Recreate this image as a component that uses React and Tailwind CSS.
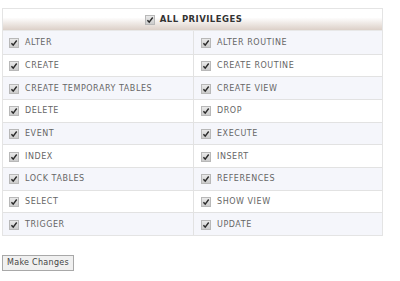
import React from 'react';

const rows = [
  ['ALTER', 'ALTER ROUTINE'],
  ['CREATE', 'CREATE ROUTINE'],
  ['CREATE TEMPORARY TABLES', 'CREATE VIEW'],
  ['DELETE', 'DROP'],
  ['EVENT', 'EXECUTE'],
  ['INDEX', 'INSERT'],
  ['LOCK TABLES', 'REFERENCES'],
  ['SELECT', 'SHOW VIEW'],
  ['TRIGGER', 'UPDATE'],
];

const Check = () => (
  <svg width="10" height="10" viewBox="0 0 10 10" className="shrink-0">
    <defs>
      <linearGradient id="cb" x1="0" y1="0" x2="0" y2="1">
        <stop offset="0" stopColor="#ebebeb" />
        <stop offset="1" stopColor="#cacaca" />
      </linearGradient>
    </defs>
    <rect x="0.5" y="0.5" width="9" height="9" fill="url(#cb)" stroke="#b8b8b8" />
    <path d="M2.4 5.2 L4.2 7.1 L7.7 2.5" fill="none" stroke="#2a2a2a" strokeWidth="1.4" />
  </svg>
);

const Cell = ({ label, right }) => (
  <div className={`flex items-center gap-[6px] pt-[1px] ${right ? 'border-l border-[#e2e2e2] pl-[7px]' : 'pl-[6px]'}`}>
    <Check />
    <span className="text-[8px] tracking-[0.55px] text-[#666]">{label}</span>
  </div>
);

export default function App() {
  return (
    <div className="w-[400px] h-[281px] bg-white font-['DejaVu_Sans',sans-serif] pt-[8px]">
      <div className="ml-[2px] w-[381px] border border-[#e4e4e4]">
        <div className="h-[22px] flex items-center justify-center gap-[5px] pl-[2px] bg-gradient-to-b from-white from-40% to-[#dcd0c8] border-b border-[#e8e8e8]">
          <Check />
          <span className="text-[8.5px] font-bold text-[#333] tracking-[0.45px]">ALL PRIVILEGES</span>
        </div>
        {rows.map(([a, b], i) => (
          <div
            key={a}
            className={`grid grid-cols-[190px_1fr] h-[22.67px] ${i > 0 ? 'border-t border-[#e2e2e2]' : ''} ${i % 2 === 0 ? 'bg-[#f5f6fb]' : 'bg-white'}`}
          >
            <Cell label={a} />
            <Cell label={b} right />
          </div>
        ))}
      </div>
      <button className="mt-[19px] ml-[2px] h-[16px] px-[4px] border border-[#a8a8a8] bg-[#f0f0f0] text-[8px] text-[#444] tracking-[0.3px] leading-none">
        Make Changes
      </button>
    </div>
  );
}
